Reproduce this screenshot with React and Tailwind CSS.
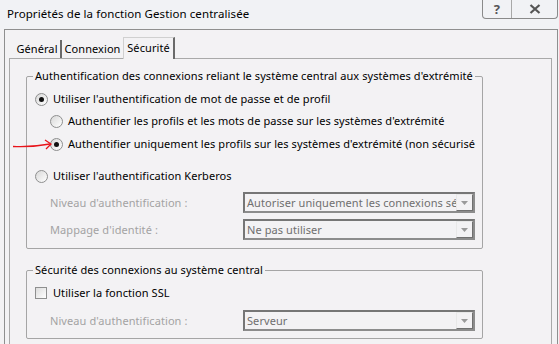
import React from "react";

const Radio = ({ checked }) => (
  <span className="w-[13px] h-[13px] rounded-full border border-[#8e8f8f] bg-gradient-to-br from-[#d8d8d8] to-[#ffffff] flex items-center justify-center shrink-0">
    {checked && <span className="w-[5px] h-[5px] rounded-full bg-[#111]" />}
  </span>
);

const Combo = ({ text }) => (
  <div className="w-[232px] h-[21px] border-2 border-[#767676] border-b-[#8c8c8c] border-r-[#8c8c8c] flex items-center overflow-hidden bg-[#f3f2f4]">
    <span className="flex-1 pl-[2px] whitespace-nowrap overflow-hidden text-[#6f6f6f] leading-[16px]">{text}</span>
    <span className="w-[17px] h-[17px] border border-[#e8e8e8] border-r-[#707070] border-b-[#707070] flex items-center justify-center shrink-0">
      <svg width="7" height="4" viewBox="0 0 7 4"><path d="M0 0 L7 0 L3.5 4 Z" fill="#9a9a9a" /></svg>
    </span>
  </div>
);

export default function App() {
  return (
    <div className="relative w-[559px] h-[344px] overflow-hidden bg-[#f3f2f4] font-['Noto_Sans',sans-serif] text-[11px] tracking-[0.08px] text-black flex flex-col">
      {/* title bar */}
      <div className="h-[29px] flex items-start justify-between shrink-0 bg-[#f1f2f5]">
        <div className="pl-[7px] pt-[6px] leading-[16px] text-[11.5px] whitespace-nowrap">Propriétés de la fonction Gestion centralisée</div>
        <div className="flex h-[19px] mr-[1px] border border-t-0 border-[#8a8a8a] rounded-b-[4px] overflow-hidden">
          <div className="w-[29px] flex items-center justify-center border-r border-[#a8a8a8] text-[#555] font-bold text-[13px] leading-none">?</div>
          <div className="w-[45px] flex items-center justify-center">
            <svg width="12" height="10" viewBox="0 0 12 10">
              <path d="M1.5 1 L10.5 9 M10.5 1 L1.5 9" stroke="#555" strokeWidth="2.2" />
            </svg>
          </div>
        </div>
      </div>

      {/* client area */}
      <div className="ml-[4px] w-[554px] flex-1 border-l border-t border-r border-[#8f8f8f] pl-[4px] pt-[7px] flex flex-col">
        {/* tabs */}
        <div className="flex items-end h-[21px] pl-[5px] relative z-10">
          <div className="w-[48px] h-[18px] flex items-center justify-center border-r-2 border-[#6a6a6a] leading-[16px]">Général</div>
          <div className="w-[61px] h-[18px] flex items-center justify-center leading-[16px]">Connexion</div>
          <div className="w-[52px] h-[22px] -mb-px flex items-start justify-center pt-[2px] border-t border-l border-[#d0d0d0] border-r-2 border-r-[#6a6a6a] bg-[#f3f2f4] leading-[16px]">Sécurité</div>
        </div>

        {/* panel */}
        <div className="w-[543px] flex-1 border border-[#a9a9a9] border-b-0 pl-[16px] pt-[17px] flex flex-col">
          {/* group 1 */}
          <div className="relative w-[457px] h-[173px] border border-[#a5a5a5] rounded-[2px] flex flex-col pt-[14px]">
            <span className="absolute -top-[9px] left-[6px] px-[2px] bg-[#f3f2f4] leading-[16px] whitespace-nowrap">
              Authentification des connexions reliant le système central aux systèmes d'extrémité
            </span>
            <div className="flex items-center h-[16px] pl-[8px] gap-[5px]">
              <Radio checked />
              <span className="leading-[16px] whitespace-nowrap">Utiliser l'authentification de mot de passe et de profil</span>
            </div>
            <div className="flex items-center h-[16px] pl-[23px] gap-[5px] mt-[6px]">
              <Radio />
              <span className="leading-[16px] whitespace-nowrap">Authentifier les profils et les mots de passe sur les systèmes d'extrémité</span>
            </div>
            <div className="flex items-center h-[16px] pl-[23px] gap-[5px] mt-[7px]">
              <Radio checked />
              <span className="leading-[16px] whitespace-nowrap">Authentifier uniquement les profils sur les systèmes d'extrémité (non sécurisé</span>
            </div>
            <div className="flex items-center h-[16px] pl-[8px] gap-[5px] mt-[16px]">
              <Radio />
              <span className="leading-[16px] whitespace-nowrap">Utiliser l'authentification Kerberos</span>
            </div>
            <div className="flex items-center pl-[23px] mt-[8px]">
              <span className="w-[193px] text-[#a3a3a3] leading-[16px] whitespace-nowrap">Niveau d'authentification :</span>
              <Combo text="Autoriser uniquement les connexions sécurisées" />
            </div>
            <div className="flex items-center pl-[23px] mt-[6px]">
              <span className="w-[193px] text-[#a3a3a3] leading-[16px] whitespace-nowrap">Mappage d'identité :</span>
              <Combo text="Ne pas utiliser" />
            </div>
          </div>

          {/* group 2 */}
          <div className="relative w-[457px] h-[69px] mt-[21px] border border-[#a5a5a5] rounded-[2px] flex flex-col pt-[14px]">
            <span className="absolute -top-[9px] left-[6px] px-[2px] bg-[#f3f2f4] leading-[16px] whitespace-nowrap">
              Sécurité des connexions au système central
            </span>
            <div className="flex items-center h-[16px] pl-[8px] gap-[6px]">
              <span className="w-[12px] h-[12px] border border-[#8e8f8f] bg-gradient-to-br from-[#dcdcdc] to-[#ffffff] shrink-0" />
              <span className="leading-[16px] whitespace-nowrap">Utiliser la fonction SSL</span>
            </div>
            <div className="flex items-center pl-[23px] mt-[9px]">
              <span className="w-[193px] text-[#a3a3a3] leading-[16px] whitespace-nowrap">Niveau d'authentification :</span>
              <Combo text="Serveur" />
            </div>
          </div>
        </div>
      </div>

      {/* red annotation arrow */}
      <svg className="absolute left-0 top-0 pointer-events-none" width="60" height="160" viewBox="0 0 60 160">
        <path d="M13 146.5 Q 30 147.5 50 144" stroke="#e8141a" strokeWidth="1.3" fill="none" />
        <path d="M45 140 L51 144 L46 149" stroke="#e8141a" strokeWidth="1.3" fill="none" />
      </svg>
    </div>
  );
}
